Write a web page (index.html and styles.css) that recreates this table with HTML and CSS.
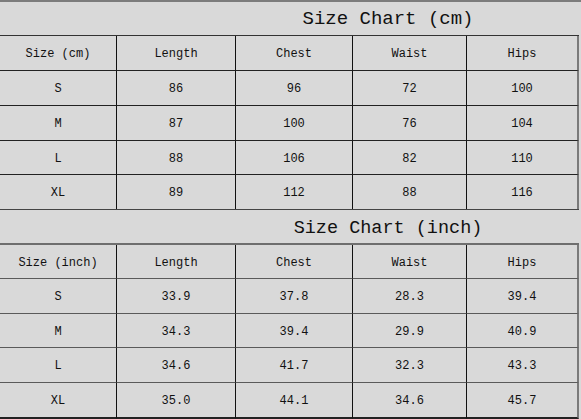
FILE: index.html
```html
<!DOCTYPE html>
<html>
<head>
<meta charset="utf-8">
<link rel="stylesheet" href="styles.css">
</head>
<body>
<div class="sheet">
  <div class="title first">Size Chart (cm)</div>
  <div class="grid g1">
    <div class="c">Size (cm)</div><div class="c">Length</div><div class="c">Chest</div><div class="c">Waist</div><div class="c last">Hips</div>
    <div class="c">S</div><div class="c">86</div><div class="c">96</div><div class="c">72</div><div class="c last">100</div>
    <div class="c">M</div><div class="c">87</div><div class="c">100</div><div class="c">76</div><div class="c last">104</div>
    <div class="c">L</div><div class="c">88</div><div class="c">106</div><div class="c">82</div><div class="c last">110</div>
    <div class="c">XL</div><div class="c">89</div><div class="c">112</div><div class="c">88</div><div class="c last">116</div>
  </div>
  <div class="title second">Size Chart (inch)</div>
  <div class="grid g2">
    <div class="c">Size (inch)</div><div class="c">Length</div><div class="c">Chest</div><div class="c">Waist</div><div class="c last">Hips</div>
    <div class="c">S</div><div class="c">33.9</div><div class="c">37.8</div><div class="c">28.3</div><div class="c last">39.4</div>
    <div class="c">M</div><div class="c">34.3</div><div class="c">39.4</div><div class="c">29.9</div><div class="c last">40.9</div>
    <div class="c">L</div><div class="c">34.6</div><div class="c">41.7</div><div class="c">32.3</div><div class="c last">43.3</div>
    <div class="c">XL</div><div class="c">35.0</div><div class="c">44.1</div><div class="c">34.6</div><div class="c last">45.7</div>
  </div>
</div>
</body>
</html>
```
FILE: styles.css
```css
* { box-sizing: border-box; }
html, body { margin: 0; padding: 0; background: #d9d9d9; }
body { width: 581px; height: 419px; overflow: hidden; font-family: "Liberation Mono", monospace; color: #111; }
.sheet { width: 581px; border-top: 2px solid #7c7c7c; }
.title {
  height: 34px;
  padding-left: 197px;
  width: 579px;
  display: flex;
  align-items: center;
  justify-content: center;
  font-size: 19px;
  border-bottom: 1px solid #333;
}
.title.second { height: 36px; font-size: 18.5px; padding-top: 3px; border-bottom: 2px solid #6e6e6e; border-top: 1px solid #444; }
.grid {
  display: grid;
  grid-template-columns: 117px 119px 117px 114px 112px;
  width: 579px;
}
.g1 { grid-template-rows: 35px 35px 35px 34px 34px; }
.g2 { grid-template-rows: 34px 35px 34px 35px 36px; }
.c {
  display: flex;
  align-items: center;
  justify-content: center;
  font-size: 12px;
  padding-top: 2px;
  border-right: 1px solid #111;
  border-bottom: 1px solid #222;
}
.g1 .c:nth-last-child(-n+5) { border-bottom: none; }
.g2 .c { border-bottom: 1px solid #5a5a5a; }
.g2 .c:nth-last-child(-n+5) { border-bottom: 2px solid #222; }
.c.last { border-right: 2px solid #7a7a7a; }
```
